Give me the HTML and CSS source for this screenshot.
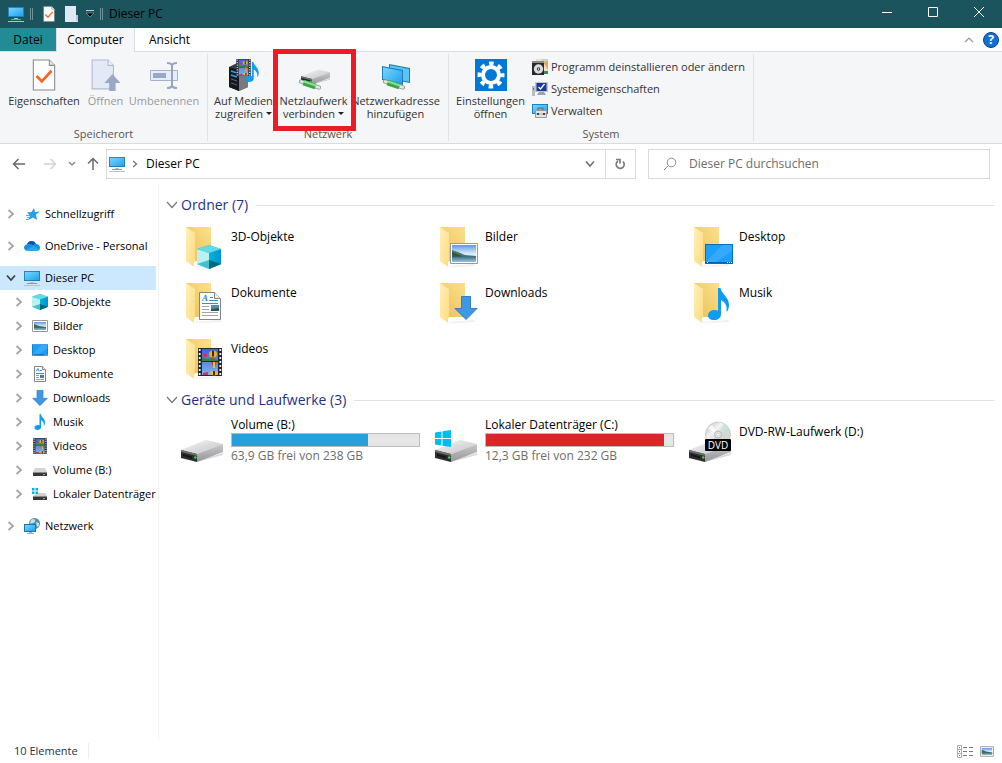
FILE: index.html
```html
<!DOCTYPE html>
<html lang="de">
<head>
<meta charset="utf-8">
<meta name="viewport" content="width=device-width, initial-scale=1">
<title>Dieser PC</title>
<link rel="stylesheet" href="styles.css">
</head>
<body>
<svg class="sprite" aria-hidden="true">
  <defs>
    <linearGradient id="g-screen" x1="0" y1="0" x2="1" y2="1"><stop offset="0" stop-color="#7fd3fb"/><stop offset=".5" stop-color="#4cbcf6"/><stop offset="1" stop-color="#23a0ea"/></linearGradient>
    <linearGradient id="g-back" x1="0" y1="1" x2="1" y2="0"><stop offset="0" stop-color="#e8bf57"/><stop offset="1" stop-color="#fde08c"/></linearGradient>
    <linearGradient id="g-flap" x1="0" y1="0" x2="1" y2="1"><stop offset="0" stop-color="#fff0b8"/><stop offset="1" stop-color="#fddb80"/></linearGradient>
    <linearGradient id="g-top" x1="0" y1="0" x2="1" y2="1"><stop offset="0" stop-color="#f4f4f5"/><stop offset="1" stop-color="#c4c4c6"/></linearGradient>
    <linearGradient id="g-side" x1="0" y1="0" x2="0" y2="1"><stop offset="0" stop-color="#c9c9cb"/><stop offset="1" stop-color="#96969a"/></linearGradient>
    <linearGradient id="g-sky" x1="0" y1="0" x2="0" y2="1"><stop offset="0" stop-color="#5b97e8"/><stop offset=".5" stop-color="#d5ecfb"/><stop offset="1" stop-color="#e9f5fc"/></linearGradient>
    <linearGradient id="g-sea" x1="0" y1="0" x2="0" y2="1"><stop offset="0" stop-color="#3a6d86"/><stop offset="1" stop-color="#9cc7dc"/></linearGradient>
    <linearGradient id="g-cube" x1="0" y1="0" x2="1" y2="0"><stop offset="0" stop-color="#00b7d4"/><stop offset="1" stop-color="#0091d5"/></linearGradient>
    <linearGradient id="g-disc" x1="0" y1="0" x2="1" y2="1"><stop offset="0" stop-color="#b9b9b9"/><stop offset=".35" stop-color="#f3f3f3"/><stop offset=".6" stop-color="#cdd8d3"/><stop offset="1" stop-color="#d9d9d9"/></linearGradient>
    <linearGradient id="g-film" x1="0" y1="0" x2="0" y2="1"><stop offset="0" stop-color="#3667d8"/><stop offset="1" stop-color="#7fb0f2"/></linearGradient>
  </defs>

  <symbol id="pc" viewBox="0 0 16 16">
    <path d="M0 1h16v10H0z" fill="#1677b5"/><path d="M.8 1.8h14.4v8.4H.8z" fill="url(#g-screen)"/>
    <path d="M6 12h4v1H6z" fill="#b7c3cc"/><path d="M3 13h10v1H3z" fill="#8b98a2"/><path d="M0 15h16v1H0z" fill="#b9c0c6"/>
  </symbol>
  <symbol id="check-doc" viewBox="0 0 22 30">
    <path d="M1 1h15l5 5v23H1z" fill="#fdfdfd" stroke="#8a8a8a"/><path d="M16 1v5h5" fill="#e8e8e8" stroke="#8a8a8a"/>
    <path d="M4 16l5 5 9-10" fill="none" stroke="#f26522" stroke-width="2.500"/>
  </symbol>
  <symbol id="blank-doc" viewBox="0 0 13 16">
    <path d="M0 0h11v10h2v6H0z" fill="#dfe8f5"/><path d="M11 9h2v6h-2z" fill="#b9c8dd"/>
  </symbol>
  <symbol id="open-doc" viewBox="0 0 28 30">
    <path d="M1 1h15l5 5v22H1z" fill="#e3eaf6" stroke="#aebbd2"/><path d="M16 1v5h5" fill="#f3f6fb" stroke="#aebbd2"/>
    <path d="M20 14l7.500 8.500H23V30h-6v-7.500h-4.500z" fill="#98a8c5"/>
  </symbol>
  <symbol id="rename" viewBox="0 0 28 26">
    <path d="M.5 8.500h27v10H.5z" fill="#e6edf8" stroke="#a3b3cf"/><path d="M3 11h13v5H3z" fill="#98a9c8"/>
    <path d="M22 2v23M17 1q4 0 5 2 1-2 5-2M17 26q4 0 5-2 1 2 5 2" fill="none" stroke="#94a5c3" stroke-width="2"/>
  </symbol>
  <symbol id="film" viewBox="0 0 24 28">
    <path d="M0 0h24v28H0z" fill="#26262b"/><path d="M4 1h16v12H4zM4 14h16v13H4z" fill="url(#g-film)"/>
    <path d="M1.700 1v27M22.300 1v27" stroke="#eee" stroke-width="1.800" stroke-dasharray="2 2"/>
    <path d="M4 9l5 2 4-1 7 2v1H4z" fill="#2a8a35"/><path d="M5 5l4 1v3H6z" fill="#c9355a"/>
    <ellipse cx="15" cy="6" rx="4" ry="3.500" fill="#e6b324"/><path d="M14 2.500h2v6h-2z" fill="#4c2233"/><path d="M13.500 9.500h3l-1 3h-1z" fill="#d93827"/>
    <path d="M13 14h6l-2 5h-2z" fill="#d13e2d"/><path d="M15 14h2v6h-2z" fill="#efc130"/>
    <ellipse cx="16" cy="25" rx="4" ry="2.300" fill="#efb827"/><path d="M5 25l5-1v3H5z" fill="#ca3458"/><path d="M15 23h2v4h-2z" fill="#3a2633"/>
  </symbol>
  <symbol id="note" viewBox="0 0 22 32">
    <path d="M10 0h2.500c1 6 8.500 9 8.500 17 0 3-1 6-2.500 7 .7-6-.5-9-5.500-12v14c0 4-3 6-7 6s-6-2-6-4.500C0 24 3 22 6.500 22c1.500 0 2.500.2 3.500.7z" fill="#0f9cf3"/>
  </symbol>
  <symbol id="media" viewBox="0 0 32 32">
    <path d="M1 8l10-5 9 3v22l-9 4-10-4z" fill="#3b3d42"/><path d="M1 8l10 3v21L1 28z" fill="#16181d"/><path d="M11 11l9-4v21l-9 4z" fill="#777a80"/>
    <path d="M3 12l6 2M3 16l6 2" stroke="#2e9df0" stroke-width="1.500"/><path d="M3 20l6 2M3 24l6 2" stroke="#58626d"/>
    <svg x="8" y="0" width="15" height="17"><use href="#film"/></svg>
    <svg x="17" y="3" width="15" height="20"><use href="#note"/></svg>
  </symbol>
  <symbol id="drive" viewBox="0 0 42 22">
    <path d="M14 21.500L42 13v2L16 22z" fill="#000" opacity=".15"/>
    <path d="M0 10L25 0l17 4-26 10z" fill="url(#g-top)"/><path d="M0 10l16 4v8L0 18z" fill="#2d2d2f"/><path d="M0 10l16 4v2L0 12z" fill="#6e6e70"/><path d="M2 14l9 2.500v2L2 16z" fill="#161617"/>
    <path d="M16 14L42 4v8L16 22z" fill="url(#g-side)"/><circle cx="14.300" cy="17.500" r="1.300" fill="#3edb3e"/>
  </symbol>
  <symbol id="net-cable" viewBox="0 0 22 11">
    <path d="M2 2.500l18 6" stroke="#8c9690" stroke-width="4" stroke-linecap="round"/><path d="M2 2.500l18 6" stroke="#e2e8e4" stroke-width="2.500" stroke-linecap="round"/><path d="M4.500 3.500l12 4" stroke="#3aa64b" stroke-width="6"/><path d="M5 2.500l12 4" stroke="#8fdc97" stroke-width="2"/>
  </symbol>
  <symbol id="net-drive" viewBox="0 0 32 32">
    <svg x="3" y="10" width="29" height="16"><use href="#drive"/></svg>
    <svg x="1" y="20" width="22" height="11"><use href="#net-cable"/></svg>
  </symbol>
  <symbol id="net-place" viewBox="0 0 32 32">
    <path d="M9 5l21 4v15L9 20z" fill="#1c7db9"/><path d="M10 6.300l19 3.600v12.800l-19-3.600z" fill="#5cc3f7"/>
    <path d="M2 7l21 4v15L2 21z" fill="#1c7db9"/><path d="M3 8.300l19 3.600v12.800L3 20.100z" fill="url(#g-screen)"/>
    <svg x="3" y="20" width="22" height="11"><use href="#net-cable"/></svg>
  </symbol>
  <symbol id="gear" viewBox="0 0 32 32">
    <path d="M0 0h32v32H0z" fill="#0078d7"/>
    <g fill="none" stroke="#fff"><circle cx="16" cy="16" r="8" stroke-width="4"/>
    <circle cx="16" cy="16" r="11.500" stroke-width="4" stroke-dasharray="4.500 4.532" stroke-dashoffset="2.250"/></g>
  </symbol>
  <symbol id="uninstall" viewBox="0 0 16 16">
    <path d="M4 0h12v15H4z" fill="#eee1c5"/><path d="M9 0h7v5l-4-1z" fill="#b9d8d4"/><path d="M11 3l5-1v9z" fill="#f0a347"/><path d="M0 2h12v14H0z" fill="#29292b"/><path d="M0 2h12v2H0z" fill="#8a8a8a"/><circle cx="6.500" cy="10" r="4.700" fill="#dcdcdc"/><circle cx="6.500" cy="10" r="1.700" fill="#333"/><circle cx="6.500" cy="10" r=".8" fill="#fff"/><path d="M12 12h4v3h-4z" fill="#388955"/>
  </symbol>
  <symbol id="sysprops" viewBox="0 0 16 16">
    <path d="M0 5h3v10H0z" fill="#b8bdc1"/><path d="M1 7h1v2H1z" fill="#35a23d"/><path d="M3 1h13v10H3z" fill="#c3c7cb"/><path d="M4.500 2h10v8h-10z" fill="#1836a8"/><path d="M6.500 6l2 2 4-5" fill="none" stroke="#fff" stroke-width="1.300"/><path d="M7 11h5l2 3H5z" fill="#9ea3a8"/>
  </symbol>
  <symbol id="manage" viewBox="0 0 16 16">
    <path d="M0 1h16v10H0z" fill="#1b7fc0"/><path d="M1 2h14v8H1z" fill="url(#g-screen)"/><path d="M6 7V5h5v2" fill="none" stroke="#666"/><path d="M3.500 7.500h11v7h-11z" fill="#e4e4e4" stroke="#999"/><path d="M5 10h2v2H5zM11 10h2v2h-2z" fill="#333"/><path d="M4 11h10" stroke="#777" stroke-width=".6"/>
  </symbol>
  <symbol id="star" viewBox="0 0 16 16">
    <path d="M10 2l1 4 5-.5-4 3 1 5.500-4-2.500L4.500 14l1.500-4.500-3-3 4.500-.5z" fill="#269fe8"/><path d="M2 9.500h4M3 11.500h3M2 13.500h3" stroke="#4aaeee"/>
  </symbol>
  <symbol id="cloud" viewBox="0 0 16 10">
    <path d="M3.500 9.800C1.500 9.800 0 8.400 0 6.600c0-1.700 1.200-3 2.900-3.200C3.700 1.300 5.400 0 7.600 0c1.900 0 3.500 1.100 4.300 2.800C14.300 3 16 4.500 16 6.700c0 1.800-1.400 3.100-3.100 3.100z" fill="#1490df"/>
    <path d="M3 3.400C4 1.200 5.600 0 7.600 0c1.900 0 3.500 1.100 4.300 2.800-1.200 0-2 .5-2.500 1.200C7.500 2.900 5 2.800 3 3.400z" fill="#0a53ae"/><path d="M1 9L10 5l5.500 3.500c-.6.8-1.500 1.300-2.600 1.300H3.500C2.500 9.800 1.600 9.500 1 9z" fill="#28a8ea"/>
  </symbol>
  <symbol id="cube" viewBox="0 0 24 24">
    <path d="M12 0l12 4v15l-12 5L0 19V4z" fill="#13b5cf"/><path d="M0 4l12 4v16L0 19z" fill="#bdf0f3"/><path d="M12 8l12-4v15l-12 5z" fill="url(#g-cube)"/><path d="M12 0l12 4-12 4L0 4z" fill="#63dbe6"/><path d="M0 19l12-4v9z" fill="#3fc3cf"/><path d="M12 15l12 4-12 5z" fill="#056879"/>
  </symbol>
  <symbol id="picture" viewBox="0 0 28 21">
    <path d="M.5.500h27v20H.5z" fill="#fff" stroke="#999"/><path d="M2 2h24v17H2z" fill="url(#g-sky)"/><path d="M2 7l6 2 7 3 11 1v2H2z" fill="#53766a"/><path d="M2 9l5 2 5 2v1H2z" fill="#2f5938"/><path d="M2 13.500h24V19H2z" fill="url(#g-sea)"/>
  </symbol>
  <symbol id="picture-s" viewBox="0 0 16 12">
    <path d="M.5.500h15v11H.5z" fill="#fff" stroke="#999"/><path d="M2 2h12v8H2z" fill="url(#g-sky)"/><path d="M2 4l5 2 7 1v1H2z" fill="#3f6956"/><path d="M2 7.500h12V10H2z" fill="url(#g-sea)"/>
  </symbol>
  <symbol id="desktop" viewBox="0 0 28 20">
    <path d="M0 0h28v20H0z" fill="#0670bd"/><path d="M1 1h26v17H1z" fill="#1b9ffb"/><path d="M1 18L17 1h10v6L11 18z" fill="#48b1fb" opacity=".6"/><path d="M1 18h26v1H1z" fill="#075a99"/><path d="M2 18h1v1H2zM22 18h1v1h-1zM24 18h1v1h-1zM26 18h1v1h-1z" fill="#fff"/>
  </symbol>
  <symbol id="document" viewBox="0 0 22 28">
    <path d="M.5.500h15l6 6v21H.5z" fill="#fdfdfd" stroke="#858585"/><path d="M15.500.500v6h6" fill="#eee" stroke="#858585"/>
    <path d="M11 5.500h3M10 8.500h9M3 11.500h16" stroke="#2894d8"/><path d="M3 14.500h7M3 17.500h7M3 20.500h16M3 23.500h16" stroke="#a5a5a5"/><path d="M12 13h8v6h-8z" fill="#4f8ebb"/><path d="M12 17l8-1v3h-8z" fill="#31593f"/>
  </symbol>
  <symbol id="document-s" viewBox="0 0 12 16">
    <path d="M.5.500h8l3 3v12H.5z" fill="#fff" stroke="#858585"/><path d="M8.500.500v3h3" fill="#eee" stroke="#858585"/>
    <path d="M2 5.500l2-3 1 3M6 4.500h2M2 7.500h8" fill="none" stroke="#2894d8"/><path d="M2 9.500h3M2 11.500h3M2 13.500h8" stroke="#999"/><path d="M6 9h4v3H6z" fill="#3f7ea6"/>
  </symbol>
  <symbol id="down" viewBox="0 0 24 24">
    <path d="M7.500.500h9v12h6.500L12 23.500 1 12.500h6.500z" fill="#3e98e6" stroke="#2f7fcb"/>
  </symbol>
  <symbol id="winlogo" viewBox="0 0 16 17">
    <path d="M0 2.500L6.500 1.500V8H0zM7.500 1.300L16 0v8H7.500zM0 9h6.500v6.500L0 14.500zM7.500 9H16v8l-8.500-1.300z" fill="#00bcf2"/>
  </symbol>
  <symbol id="drive-s" viewBox="0 0 16 16">
    <path d="M3 6h10l2 4H1z" fill="#d5d5d6"/><path d="M1 10h14v4H1z" fill="#39393b"/><path d="M1 10h14v1H1z" fill="#8b8b8d"/><path d="M11 12h2v1h-2z" fill="#44e044"/>
  </symbol>
  <symbol id="windrive-s" viewBox="0 0 16 16">
    <path d="M5 7h8l2 3H1z" fill="#d0d0d1"/><path d="M1 10h14v4H1z" fill="#39393b"/><path d="M1 10h14v1H1z" fill="#8b8b8d"/><path d="M11 12h2v1h-2z" fill="#44e044"/><path d="M0 2h2.500v2.500H0zM3.500 2H6v2.500H3.500zM0 5.500h2.500V8H0zM3.500 5.500H6V8H3.500z" fill="#00b4ee"/>
  </symbol>
  <symbol id="network" viewBox="0 0 16 16">
    <circle cx="10.500" cy="5.500" r="5.500" fill="#4f8fae"/><path d="M7 2q3-2 4 0t-2 3-3 0zM12 4l3 1v3l-2 1z" fill="#c7dfe6"/>
    <path d="M0 6h12v8H0z" fill="#1677b5"/><path d="M1 7h10v6H1z" fill="url(#g-screen)"/><path d="M5 14h3v1H5zM3 15h7v1H3z" fill="#a5b2bb"/>
  </symbol>
  <symbol id="folder" viewBox="0 0 48 48">
    <path d="M14 42l26-2 2 2-26 1z" fill="#000" opacity=".06"/>
    <path d="M6 3h25v34H10z" fill="url(#g-back)"/><path d="M6 3l9 6v29h-1v5L6 37z" fill="url(#g-flap)"/>
  </symbol>
  <symbol id="chev-r" viewBox="0 0 8 10"><path d="M1.500 1L6 5 1.500 9" fill="none" stroke="currentColor" stroke-width="1.800"/></symbol>
  <symbol id="chev-d" viewBox="0 0 10 8"><path d="M1 1.500L5 6l4-4.500" fill="none" stroke="currentColor" stroke-width="1.800"/></symbol>
  <symbol id="chev-thin" viewBox="0 0 12 8"><path d="M1 1l5 5.500L11 1" fill="none" stroke="currentColor" stroke-width="1.200"/></symbol>
</svg>

<div class="window">
  <header class="titlebar">
    <svg class="i16"><use href="#pc"/></svg>
    <span class="grip"></span>
    <button class="quick" aria-label="Eigenschaften"><svg class="quick-doc"><use href="#check-doc"/></svg></button>
    <button class="quick quick-new" aria-label="Neuer Ordner"><svg class="quick-blank"><use href="#blank-doc"/></svg></button>
    <button class="quick quick-menu" aria-label="Schnellzugriff anpassen"><svg width="8" height="8" viewBox="0 0 8 8"><path d="M0 .5h8" stroke="#bcd"/><path d="M0 3h8L4 7z" stroke="#9bb" stroke-width=".6"/></svg></button>
    <span class="grip"></span>
    <h1 class="title">Dieser PC</h1>
    <div class="window-buttons">
      <button aria-label="Minimieren"><svg width="12" height="12" viewBox="0 0 12 12"><path d="M1 6.500h10"/></svg></button>
      <button aria-label="Maximieren"><svg width="12" height="12" viewBox="0 0 12 12"><path d="M1.500 1.500h9v9h-9z"/></svg></button>
      <button aria-label="Schließen"><svg width="12" height="12" viewBox="0 0 12 12"><path d="M1 1l10 10M11 1L1 11"/></svg></button>
    </div>
  </header>

  <nav class="tabs" aria-label="Menüband">
    <button class="tab tab-file">Datei</button>
    <button class="tab tab-active">Computer</button>
    <button class="tab">Ansicht</button>
    <div class="tabs-end">
      <button aria-label="Menüband minimieren"><svg class="collapse" viewBox="0 0 12 8"><path d="M2 6l4-4 4 4" fill="none" stroke="#999" stroke-width="1.200"/></svg></button>
      <button class="help" aria-label="Hilfe">?</button>
    </div>
  </nav>

  <section class="ribbon">
    <div class="group group-place">
      <div class="tools">
        <button class="tool w-props"><svg class="tool-icon"><use href="#check-doc"/></svg>Eigenschaften</button>
        <button class="tool w-open" disabled><svg class="tool-icon"><use href="#open-doc"/></svg>Öffnen</button>
        <button class="tool w-rename" disabled><svg class="tool-icon rename-icon"><use href="#rename"/></svg>Umbenennen</button>
      </div>
      <h2 class="group-name">Speicherort</h2>
    </div>
    <div class="group group-net">
      <div class="tools">
        <button class="tool w-media"><svg class="tool-icon"><use href="#media"/></svg>Auf Medien<span>zugreifen <i class="caret"></i></span></button>
        <button class="tool w-map"><svg class="tool-icon"><use href="#net-drive"/></svg>Netzlaufwerk<span>verbinden <i class="caret"></i></span><i class="marker"></i></button>
        <button class="tool w-addr"><svg class="tool-icon"><use href="#net-place"/></svg>Netzwerkadresse<span>hinzufügen</span></button>
      </div>
      <h2 class="group-name">Netzwerk</h2>
    </div>
    <div class="group group-system">
      <div class="tools">
        <button class="tool w-settings"><svg class="tool-icon"><use href="#gear"/></svg>Einstellungen<span>öffnen</span></button>
        <div class="small-tools">
          <button><svg class="i16"><use href="#uninstall"/></svg>Programm deinstallieren oder ändern</button>
          <button><svg class="i16"><use href="#sysprops"/></svg>Systemeigenschaften</button>
          <button><svg class="i16"><use href="#manage"/></svg>Verwalten</button>
        </div>
      </div>
      <h2 class="group-name">System</h2>
    </div>
  </section>

  <div class="location">
    <div class="history">
      <button aria-label="Zurück"><svg width="14" height="12" viewBox="0 0 14 12"><path d="M13 6H2M6.500 1L1.500 6l5 5" stroke="#6a6a6a"/></svg></button>
      <button class="forward" aria-label="Vorwärts"><svg width="14" height="12" viewBox="0 0 14 12"><path d="M1 6h11M7.500 1l5 5-5 5" stroke="#d4d4d4"/></svg></button>
      <button aria-label="Verlauf"><svg width="8" height="6" viewBox="0 0 8 6"><path d="M1 1l3 3 3-3" stroke="#8a8a8a"/></svg></button>
      <button aria-label="Nach oben"><svg width="12" height="14" viewBox="0 0 12 14"><path d="M6 13V2M1 6.500l5-5 5 5" stroke="#6a6a6a"/></svg></button>
    </div>
    <div class="address">
      <svg class="i16"><use href="#pc"/></svg>
      <svg class="crumb-arrow"><use href="#chev-r"/></svg>
      <a class="crumb" href="#pc">Dieser PC</a>
      <button class="address-drop" aria-label="Vorherige Orte"><svg width="10" height="8"><use href="#chev-d"/></svg></button>
      <button class="refresh" aria-label="Aktualisieren"><svg width="11" height="12" viewBox="0 0 11 12"><path d="M3 3a4 4 0 1 0 5 .5M1 1.500h4v4" fill="none" stroke="#7a7a7a" stroke-width="1.700"/></svg></button>
    </div>
    <label class="search">
      <svg width="14" height="14" viewBox="0 0 14 14"><circle cx="8.500" cy="5.500" r="4.300" fill="none" stroke="#8b8b8b"/><path d="M5.500 8.500L1 13" stroke="#8b8b8b"/></svg>
      <input type="search" placeholder="Dieser PC durchsuchen" aria-label="Dieser PC durchsuchen">
    </label>
  </div>

  <div class="body">
    <nav class="tree" aria-label="Navigationsbereich">
      <a class="node" href="#q"><svg class="twist"><use href="#chev-r"/></svg><svg class="i16"><use href="#star"/></svg><span>Schnellzugriff</span></a>
      <a class="node" href="#o"><svg class="twist"><use href="#chev-r"/></svg><svg class="i16"><use href="#cloud"/></svg><span>OneDrive - Personal</span></a>
      <div class="branch">
        <a class="node node-selected" href="#pc"><svg class="twist"><use href="#chev-d"/></svg><svg class="i16"><use href="#pc"/></svg><span>Dieser PC</span></a>
        <a class="node child" href="#3d"><svg class="twist"><use href="#chev-r"/></svg><svg class="i16"><use href="#cube"/></svg><span>3D-Objekte</span></a>
        <a class="node child" href="#b"><svg class="twist"><use href="#chev-r"/></svg><svg class="i16"><use href="#picture-s"/></svg><span>Bilder</span></a>
        <a class="node child" href="#d"><svg class="twist"><use href="#chev-r"/></svg><svg class="i16"><use href="#desktop"/></svg><span>Desktop</span></a>
        <a class="node child" href="#dk"><svg class="twist"><use href="#chev-r"/></svg><svg class="i16"><use href="#document-s"/></svg><span>Dokumente</span></a>
        <a class="node child" href="#dl"><svg class="twist"><use href="#chev-r"/></svg><svg class="i16"><use href="#down"/></svg><span>Downloads</span></a>
        <a class="node child" href="#m"><svg class="twist"><use href="#chev-r"/></svg><svg class="i16"><use href="#note"/></svg><span>Musik</span></a>
        <a class="node child" href="#v"><svg class="twist"><use href="#chev-r"/></svg><svg class="i16"><use href="#film"/></svg><span>Videos</span></a>
        <a class="node child" href="#vb"><svg class="twist"><use href="#chev-r"/></svg><svg class="i16"><use href="#drive-s"/></svg><span>Volume (B:)</span></a>
        <a class="node child" href="#vc"><svg class="twist"><use href="#chev-r"/></svg><svg class="i16"><use href="#windrive-s"/></svg><span>Lokaler Datenträger</span></a>
      </div>
      <a class="node" href="#n"><svg class="twist"><use href="#chev-r"/></svg><svg class="i16"><use href="#network"/></svg><span>Netzwerk</span></a>
    </nav>

    <main class="content">
      <h2 class="section-name"><svg class="fold"><use href="#chev-thin"/></svg>Ordner (7)</h2>
      <div class="tiles">
        <a class="tile" href="#3d"><svg class="tile-icon" viewBox="0 0 48 48"><use href="#folder"/><svg x="17" y="21" width="24" height="24"><use href="#cube"/></svg></svg>3D-Objekte</a>
        <a class="tile" href="#b"><svg class="tile-icon" viewBox="0 0 48 48"><use href="#folder"/><svg x="16" y="19" width="28" height="21"><use href="#picture"/></svg></svg>Bilder</a>
        <a class="tile" href="#d"><svg class="tile-icon" viewBox="0 0 48 48"><use href="#folder"/><svg x="17" y="20" width="28" height="20"><use href="#desktop"/></svg></svg>Desktop</a>
        <a class="tile" href="#dk"><svg class="tile-icon" viewBox="0 0 48 48"><use href="#folder"/><svg x="19" y="12" width="22" height="28"><use href="#document"/></svg><text x="22" y="21" class="doc-letter">A</text></svg>Dokumente</a>
        <a class="tile" href="#dl"><svg class="tile-icon" viewBox="0 0 48 48"><use href="#folder"/><svg x="20" y="16" width="24" height="24"><use href="#down"/></svg></svg>Downloads</a>
        <a class="tile" href="#m"><svg class="tile-icon" viewBox="0 0 48 48"><use href="#folder"/><svg x="20" y="8" width="22" height="32"><use href="#note"/></svg></svg>Musik</a>
        <a class="tile" href="#v"><svg class="tile-icon" viewBox="0 0 48 48"><use href="#folder"/><svg x="18" y="12" width="24" height="28"><use href="#film"/></svg></svg>Videos</a>
      </div>
      <h2 class="section-name"><svg class="fold"><use href="#chev-thin"/></svg>Geräte und Laufwerke (3)</h2>
      <div class="tiles drives">
        <a class="tile" href="#vb"><svg class="tile-icon" viewBox="0 0 48 48"><svg x="1" y="24" width="42" height="22"><use href="#drive"/></svg></svg>
          <span class="usage"><label for="use-b">Volume (B:)</label><progress id="use-b" class="bar" max="1000" value="725"></progress><small>63,9 GB frei von 238 GB</small></span></a>
        <a class="tile" href="#vc"><svg class="tile-icon" viewBox="0 0 48 48"><svg x="1" y="24" width="42" height="22"><use href="#drive"/></svg><svg x="1" y="14" width="16" height="17"><use href="#winlogo"/></svg></svg>
          <span class="usage"><label for="use-c">Lokaler Datenträger (C:)</label><progress id="use-c" class="bar bar-full" max="1000" value="950"></progress><small>12,3 GB frei von 232 GB</small></span></a>
        <a class="tile" href="#vd"><svg class="tile-icon" viewBox="0 0 48 48"><svg x="1" y="24" width="42" height="22"><use href="#drive"/></svg>
          <circle cx="30" cy="18.500" r="12.500" fill="url(#g-disc)" stroke="#bbb" stroke-width=".6"/><path d="M30 18.500l6-11 4 4z" fill="#bfe6cf" opacity=".7"/><path d="M30 18.500l-6-10-4 4z" fill="#fff" opacity=".7"/><circle cx="30" cy="18.500" r="3.500" fill="#e6e6e6" stroke="#999" stroke-width=".6"/><circle cx="30" cy="18.500" r="1.500" fill="#fff" stroke="#aaa" stroke-width=".5"/>
          <rect x="17" y="23" width="26" height="12" rx="1"/><text x="30" y="32.500" class="dvd">DVD</text></svg>DVD-RW-Laufwerk (D:)</a>
      </div>
    </main>
  </div>

  <footer class="status">
    <span class="count">10 Elemente</span>
    <div class="views">
      <button aria-label="Details"><svg width="16" height="13" viewBox="0 0 16 13"><path d="M.5.500h4v12h-4zM.5 4.500h4M.5 8.500h4" fill="#fff" stroke="#aaa"/><path d="M2 2h1v1H2zM2 6h1v1H2z" fill="#36c"/><path d="M2 10h1v1H2z" fill="#c33"/><path d="M6 2.500h4M12 2.500h4M6 6.500h4M12 6.500h4M6 10.500h4M12 10.500h4" stroke="#777"/></svg></button>
      <button aria-label="Große Symbole"><svg width="14" height="11"><use href="#picture-s"/></svg></button>
    </div>
  </footer>
</div>
</body>
</html>
```

FILE: styles.css
```css
* { box-sizing: border-box; }

body {
  margin: 0;
  background: #fff;
  color: #000;
  font: 12px/16px "Open Sans", "Noto Sans", sans-serif;
}

button {
  border: 0;
  padding: 0;
  background: none;
  color: inherit;
  font: inherit;
}

a { color: inherit; text-decoration: none; }
svg { flex: none; }
h1, h2 { margin: 0; font-weight: normal; }

.sprite { position: absolute; width: 0; height: 0; }
.i16 { width: 16px; height: 16px; }
.doc-letter { font: italic bold 9px "Liberation Serif", serif; fill: #1e88d0; }
.dvd { font: 10px "Open Sans", sans-serif; fill: #fff; text-anchor: middle; }

.window { display: flex; flex-direction: column; min-height: 100vh; }

/* Title bar */
.titlebar {
  display: flex;
  align-items: center;
  height: 28px;
  padding-left: 8px;
  background: #1b545c;
}
.titlebar > .i16 { margin-right: 6px; }
.grip {
  width: 3px;
  height: 12px;
  border: solid #6f9297;
  border-width: 0 1px;
}
.quick { display: flex; margin-left: 10px; }
.quick-doc { width: 12px; height: 16px; }
.quick-blank { width: 13px; height: 16px; }
.quick-menu { margin: 0 6px 0 8px; }
.title { margin-left: 6px; font-size: 12px; line-height: 16px; }
.window-buttons { display: flex; margin-left: auto; align-self: stretch; }
.window-buttons button {
  display: flex;
  align-items: center;
  justify-content: center;
  width: 46px;
  padding-bottom: 4px;
}
.window-buttons path { fill: none; stroke: #fff; }

/* Tabs */
.tabs {
  display: flex;
  height: 24px;
  border-bottom: 1px solid #dcdddf;
}
.tab { padding: 0 14px; height: 23px; }
.tab-file { width: 56px; padding: 0; background: #228c96; }
.tab-active {
  width: 79px;
  height: 24px;
  padding: 0;
  border: solid #dcdddf;
  border-width: 0 1px;
  background: #f5f6f7;
}
.tabs-end { display: flex; align-items: center; gap: 8px; margin-left: auto; padding-right: 3px; }
.collapse { display: block; width: 12px; height: 8px; }
.help {
  width: 16px;
  height: 16px;
  border: 1px solid #0a3f86;
  border-radius: 8px;
  background: #1272d4;
  color: #fff;
  font-weight: bold;
  line-height: 14px;
}

/* Ribbon */
.ribbon {
  display: flex;
  height: 92px;
  padding: 2px 0;
  border-bottom: 1px solid #dadbdc;
  background: #f5f6f7;
  color: #333;
}
.group {
  display: flex;
  flex-direction: column;
  justify-content: space-between;
  border-right: 1px solid #e1e2e4;
}
.group-place { width: 208px; }
.group-net { width: 241px; }
.group-system { width: 305px; }
.group-name { font-size: 11px; line-height: 14px; text-align: center; color: #555; }
.tools { display: flex; padding: 5px 0 0 4px; }
.group-system .tools { padding-left: 3px; }
.tool {
  position: relative;
  display: flex;
  flex-direction: column;
  align-items: center;
  font-size: 11px;
  line-height: 13px;
  white-space: nowrap;
}
.tool:disabled { color: #999; }
.tool-icon { width: 32px; height: 32px; margin-bottom: 3px; }
.tool span { display: flex; align-items: center; gap: 3px; }
.w-props { width: 80px; }
.w-open { width: 43px; }
.w-rename { width: 74px; }
.w-media { width: 63px; }
.w-map { width: 77px; }
.w-addr { width: 87px; }
.w-settings { width: 77px; }
.rename-icon { padding: 2px; }
.caret {
  border: solid transparent;
  border-width: 3px 3px 0;
  border-top-color: #222;
}
.marker {
  position: absolute;
  inset: -10px -4px -11px -2px;
  z-index: 1;
  border: 5px solid #ed1c24;
}
.small-tools { display: flex; flex-direction: column; gap: 6px; padding-left: 3px; }
.small-tools button { display: flex; align-items: center; gap: 3px; height: 16px; font-size: 11px; white-space: nowrap; }

/* Location bar */
.location {
  display: flex;
  align-items: center;
  height: 40px;
  padding: 0 12px;
}
.history { display: flex; justify-content: space-between; align-items: center; width: 87px; margin-right: 7px; }
.history button { display: flex; }
.history .forward { margin-left: 6px; }
.history path { fill: none; stroke-width: 1.5px; }
.address {
  display: flex;
  flex: 1;
  align-items: center;
  height: 30px;
  border: 1px solid #d9d9d9;
  padding-left: 2px;
}
.crumb-arrow { width: 6px; height: 8px; margin: 0 8px 0 7px; color: #777; }
.crumb { margin-right: auto; }
.address-drop, .refresh { display: flex; align-items: center; justify-content: center; width: 30px; height: 28px; color: #777; }
.refresh { border-left: 1px solid #d9d9d9; }
.search {
  display: flex;
  align-items: center;
  gap: 12px;
  width: 342px;
  height: 30px;
  margin-left: 12px;
  padding: 0 14px;
  border: 1px solid #d9d9d9;
}
.search input { flex: 1; min-width: 0; border: 0; padding: 0; outline: 0; font: inherit; }
.search input::placeholder { color: #6d6d6d; opacity: 1; }

/* Folder tree and content */
.body { display: flex; flex: 1; }
.tree {
  display: flex;
  flex-direction: column;
  gap: 8px;
  width: 159px;
  padding: 18px 2px 0 0;
  border-right: 1px solid #f3f3f3;
  font-size: 11px;
}
.node {
  display: flex;
  align-items: center;
  height: 24px;
  padding-left: 6px;
  white-space: nowrap;
}
.node .i16 { margin: 0 5px 0 8px; }
.child { padding-left: 14px; }
.node-selected { background: #cce8ff; }
.twist { width: 10px; height: 10px; color: #a5a5a5; }
.node-selected .twist { color: #404040; }

.content { flex: 1; padding: 10px 7px 0 7px; }
.section-name {
  display: flex;
  align-items: center;
  color: #1e3287;
  font-size: 14px;
  line-height: 22px;
}
.section-name::after { content: ""; flex: 1; height: 1px; margin-left: 8px; background: #e2e2e2; }
.fold { width: 12px; height: 8px; margin-right: 3px; color: #777; }
.tiles {
  display: grid;
  grid-template-columns: repeat(auto-fill, 254px);
  gap: 8px 0;
  padding: 8px 0 5px 14px;
}
.drives { padding-top: 5px; }
.tile { display: flex; gap: 3px; line-height: 26px; }
.tile-icon { width: 48px; height: 48px; }
.drives .tile { line-height: 32px; }
.drives .usage { display: flex; flex-direction: column; flex: 1; margin-right: 14px; line-height: 17px; }
.bar {
  display: block;
  width: 100%;
  height: 14px;
  border: 1px solid #bcbcbc;
  background: #e6e6e6;
  appearance: none;
}
.bar::-webkit-progress-bar { background: #e6e6e6; }
.bar::-webkit-progress-value { background: #26a0da; }
.bar-full::-webkit-progress-value { background: #da2626; }
.usage small { font-size: 12px; color: #6d6d6d; }

/* Status bar */
.status {
  display: flex;
  align-items: center;
  justify-content: space-between;
  height: 24px;
  padding: 0 8px 0 14px;
}
.count { padding-right: 10px; border-right: 1px solid #eee; color: #1e3250; font-size: 11px; }
.views { display: flex; gap: 7px; align-items: center; }
.views button { display: flex; }
```
